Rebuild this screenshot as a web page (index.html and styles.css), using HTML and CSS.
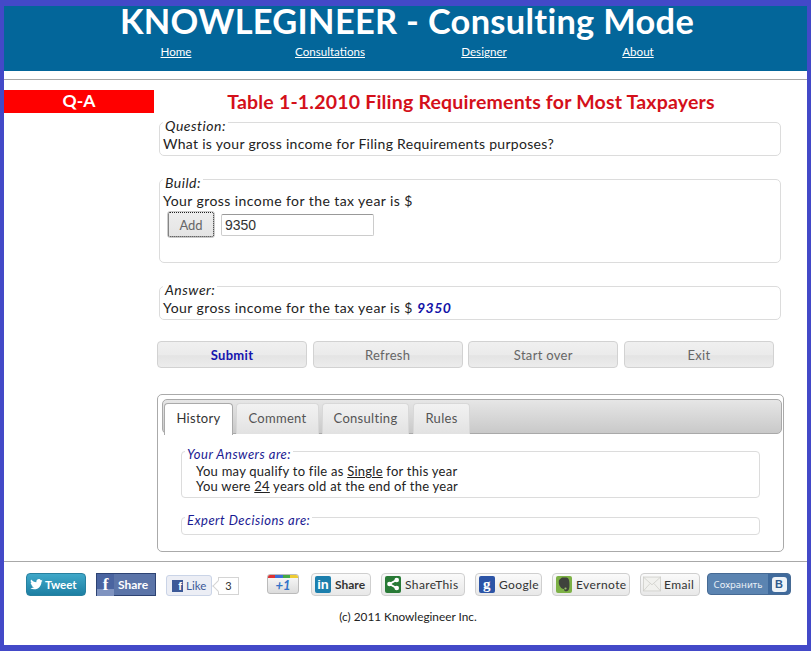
FILE: index.html
```html
<!DOCTYPE html>
<html lang="en">
<head>
<meta charset="utf-8">
<title>Knowlegineer - Consulting Mode</title>
<link rel="stylesheet" href="styles.css">
</head>
<body>
<div class="page">
  <header class="masthead">
    <h1>KNOWLEGINEER - Consulting Mode</h1>
    <nav class="nav">
      <a href="#">Home</a>
      <a href="#">Consultations</a>
      <a href="#">Designer</a>
      <a href="#">About</a>
    </nav>
  </header>
  <div class="main">
    <aside class="side"><div class="qa">Q-A</div></aside>
    <section class="content">
      <h2 class="title">Table 1-1.2010 Filing Requirements for Most Taxpayers</h2>
      <fieldset class="box">
        <legend>Question:</legend>
        <div class="line">What is your gross income for Filing Requirements purposes?</div>
      </fieldset>
      <fieldset class="box box-build">
        <legend>Build:</legend>
        <div class="line line-wide">Your gross income for the tax year is $</div>
        <div class="addrow">
          <button class="add" type="button">Add</button>
          <input class="amount" type="text" value="9350">
        </div>
      </fieldset>
      <fieldset class="box">
        <legend>Answer:</legend>
        <div class="line line-wide">Your gross income for the tax year is $ <b class="val">9350</b></div>
      </fieldset>
      <div class="actions">
        <button class="act act-primary" type="button">Submit</button>
        <button class="act" type="button">Refresh</button>
        <button class="act" type="button">Start over</button>
        <button class="act" type="button">Exit</button>
      </div>
      <div class="tabs">
        <div class="tabbar">
          <span class="tab tab-on">History</span>
          <span class="tab tab-comment">Comment</span>
          <span class="tab tab-consulting">Consulting</span>
          <span class="tab tab-rules">Rules</span>
        </div>
        <div class="tabbody">
          <fieldset class="sub">
            <legend>Your Answers are:</legend>
            <div class="subline">You may qualify to file as <u>Single</u> for this year</div>
            <div class="subline">You were <u>24</u> years old at the end of the year</div>
          </fieldset>
          <fieldset class="sub sub-empty">
            <legend>Expert Decisions are:</legend>
          </fieldset>
        </div>
      </div>
    </section>
  </div>
  <footer class="foot">
    <div class="social">
      <a class="s s-tweet" href="#"><svg width="13" height="11" viewBox="0 0 16 14"><path fill="#fff" d="M16 2.2c-.6.3-1.2.4-1.9.5.7-.4 1.2-1 1.4-1.800-.6.400-1.300.600-2 .800C12.900.6 12 .1 11.100.1 9.300.1 7.800 1.600 7.800 3.400c0 .3 0 .5.100.7C5.200 4 2.800 2.700 1.100.700.800 1.200.600 1.800.600 2.400c0 1.100.600 2.100 1.500 2.700-.500 0-1-.200-1.500-.400 0 1.600 1.100 2.900 2.600 3.200-.500.100-1 .200-1.500.100.400 1.300 1.600 2.300 3.100 2.300C3.600 11.200 1.800 11.900 0 11.700 1.500 12.600 3.200 13.200 5 13.200c6 0 9.300-5 9.300-9.300v-.400c.7-.400 1.200-1 1.700-1.300z"/></svg><span>Tweet</span></a>
      <a class="s s-share" href="#"><span class="fcell">f</span><span>Share</span></a>
      <span class="like"><a class="s s-like" href="#"><span class="fmini">f</span><span>Like</span></a><span class="count">3</span></span>
      <a class="s s-plus" href="#"><span class="gbar"></span><span class="gplus">+1</span></a>
      <a class="s s-pill s-in" href="#"><span class="ico ico-in">in</span><span>Share</span></a>
      <a class="s s-pill s-sharethis" href="#"><span class="ico ico-st"><svg width="14" height="14" viewBox="0 0 14 14"><path fill="none" stroke="#fff" stroke-width="2" d="M10.500 3 3.500 7l7 4"/><circle cx="3.500" cy="7" r="2.300" fill="#fff"/><circle cx="10.700" cy="3" r="2.300" fill="#fff"/><circle cx="10.700" cy="11" r="2.300" fill="#fff"/></svg></span><span>ShareThis</span></a>
      <a class="s s-pill s-google" href="#"><span class="ico ico-g">g</span><span>Google</span></a>
      <a class="s s-pill s-evernote" href="#"><span class="ico ico-ev"><svg width="14" height="15" viewBox="0 0 14 15"><path fill="#3f423c" d="M2 3 5 .500h4.500c2 .300 2.500 2 2.800 4.500.300 3 .200 5.500-.500 7.500-.500 1.500-2 2-3.500 1.700-1.200-.300-1.500-1.200-1-2.200-1.500 0-3-.500-3.800-2C1.700 8 1.500 5.500 2 3z"/><circle cx="8.500" cy="11.500" r="1.100" fill="#9cc06a"/></svg></span><span>Evernote</span></a>
      <a class="s s-pill s-email" href="#"><span class="ico ico-mail"><svg width="22" height="18" viewBox="0 0 22 18"><rect x=".5" y=".5" width="21" height="17" fill="#f1f1ee" stroke="#cfcfca"/><path fill="none" stroke="#cfcfca" d="M.5.500 11 10 21.500.500M.5 17.500l8-9M21.500 17.500l-8-9"/></svg></span><span>Email</span></a>
      <a class="s s-vk" href="#"><span class="vk-label">Сохранить</span><span class="vk-cell"><span class="vk-b">В</span></span></a>
    </div>
    <p class="copy">(c) 2011 Knowlegineer Inc.</p>
  </footer>
</div>
</body>
</html>
```
FILE: styles.css
```css
* { box-sizing: border-box; }
html, body { margin: 0; height: 651px; overflow: hidden; background: #4349c8; }
body { padding: 6px 4px 6px; font-family: Lato, "Noto Sans", sans-serif; color: #222; font-size: 14px; }
.page { height: 639px; background: #fff; }

.masthead { height: 65px; background: #03669a; text-align: center; color: #fff; }
.masthead h1 { margin: 0 0 0 3px; font-size: 34.4px; line-height: 33px; height: 33px; font-weight: 700; white-space: nowrap; letter-spacing: .3px; position: relative; top: -2px; }
.nav { display: grid; grid-template-columns: repeat(4, 154px); justify-content: center; margin: 4px 0 0 3px; font-size: 11.6px; line-height: 18px; }
.nav a { color: #fff; }

.main { display: flex; margin-top: 8px; padding-top: 10px; border-top: 1px solid #a8a8a8; height: 482px; }
.side { width: 150px; flex: none; }
.qa { height: 23px; line-height: 22px; background: #f00; color: #fff; font-weight: 700; font-size: 17.5px; text-align: center; }
.content { width: 622px; margin-left: 5px; flex: none; }
.title { margin: 0; height: 21px; line-height: 24px; font-size: 19.5px; font-weight: 700; color: #d4101a; text-align: center; white-space: nowrap; letter-spacing: .2px; padding-left: 2px; position: relative; z-index: 1; }

.box { margin: 0 0 12px; padding: 0 3px; border: 1px solid #dcdcdc; border-radius: 5px; min-width: 0; }
.box legend { padding: 8px 2px 0; line-height: 14px; font-size: 14px; font-style: italic; letter-spacing: .5px; color: #222; }
.line { line-height: 22px; height: 22px; letter-spacing: .3px; white-space: nowrap; }
.line-wide { letter-spacing: .43px; }
.box-build { height: 95px; }
.val { color: #1212a8; font-style: italic; font-weight: 700; letter-spacing: .5px; }
.addrow { display: flex; align-items: center; margin: -1px 0 0 4px; }
.add { width: 48px; height: 27px; padding: 0; border: 1px solid #ccc; border-radius: 3px; outline: 1px dotted #222; outline-offset: -2px; background: linear-gradient(#eee, #e4e4e4); color: #666; font: 13px Lato, sans-serif; }
.amount { width: 153px; height: 22px; margin-left: 6px; padding: 0 3px; border: 1px solid #ccc; border-top-color: #999; border-radius: 2px; font: 14px "Liberation Sans", sans-serif; color: #333; }

.actions { display: flex; justify-content: space-between; width: 617px; margin: 21px 0 0 -2px; }
.act { width: 150px; height: 27px; padding: 0; border: 1px solid #d2d2d2; border-radius: 4px; background: linear-gradient(#f0f0f0 0, #ebebeb 50%, #e4e4e4 55%, #ececec 100%); color: #666; font: 13px Lato, sans-serif; letter-spacing: .3px; }
.act-primary { color: #1515ae; font-weight: 700; }

.tabs { width: 627px; height: 158px; margin: 26px 0 0 -2px; padding: 4px 1px; border: 1px solid #aaa; border-radius: 5px; }
.tabbar { display: flex; height: 35px; padding: 3px 0 0 1px; border: 1px solid #a9a9a9; border-radius: 5px; background: linear-gradient(#e6e6e6, #c9c9c9); margin-left: 3px; }
.tab { height: 31px; margin-right: 3px; border: 1px solid #d8d8d8; border-bottom: 0; border-radius: 4px 4px 0 0; background: linear-gradient(#f2f2f2, #e2e2e2); color: #555; font-size: 13px; line-height: 29px; text-align: center; letter-spacing: .3px; }
.tab-on { width: 69px; background: #fff; color: #333; height: 32px; border-color: #aaa; }
.tab-comment { width: 83px; }
.tab-consulting { width: 87px; margin-right: 4px; }
.tab-rules { width: 57px; }
.tabbody { padding: 7px 0 0 22px; }

.sub { width: 579px; height: 57px; margin: 0 0 9px; padding: 3px 14px 0; border: 1px solid #dcdcdc; border-radius: 4px; min-width: 0; }
.sub legend { margin-left: -11px; padding: 6px 2px 0; line-height: 14px; font-size: 13px; font-style: italic; color: #1a1a92; letter-spacing: .5px; }
.subline { font-size: 13px; line-height: 15px; letter-spacing: .25px; white-space: nowrap; }
.sub-empty { height: 28px; }

.foot { border-top: 1px solid #a8a8a8; height: 84px; }
.social { display: flex; align-items: flex-start; padding: 11px 0 0 22px; height: 37px; font-size: 12px; }
.s { display: flex; align-items: center; height: 23px; text-decoration: none; color: #333; }
.s-tweet { width: 60px; margin-right: 10px; padding: 0 0 1px 3px; gap: 2px; border: 1px solid #27809f; border-radius: 4px; background: linear-gradient(#3fa8c9, #1d7fa3); color: #fff; font-weight: 700; font-size: 11.5px; }
.s-share { width: 60px; margin-right: 10px; padding-bottom: 1px; border: 1px solid #2d4373; background: #5b74a8; color: #fff; font-weight: 700; }
.fcell { width: 17px; height: 22px; margin-bottom: -1px; text-align: center; font: 700 17px/21px "Liberation Serif", serif; background: linear-gradient(#4a64a0 70%, #7f93c0 70%); margin-right: 4px; }
.like { display: flex; align-items: center; margin-right: 28px; margin-top: 2px; }
.s-like { width: 46px; height: 21px; padding-left: 5px; gap: 3px; border: 1px solid #cad4e7; border-radius: 3px; background: #eceef5; color: #3b5998; font-size: 11.5px; }
.fmini { width: 11px; height: 12px; background: #3b5998; color: #fff; font: 700 11px/12px "Liberation Sans", sans-serif; text-align: right; padding-right: 1px; }
.count { position: relative; width: 21px; height: 18px; margin-left: 6px; border: 1px solid #d4d4d4; background: #fff; font-size: 11px; line-height: 16px; text-align: center; color: #333; }
.count::before { content: ""; position: absolute; left: -5px; top: 4px; width: 7px; height: 7px; background: #fff; border-left: 1px solid #d4d4d4; border-bottom: 1px solid #d4d4d4; transform: rotate(45deg); }
.s-plus { position: relative; width: 32px; height: 20px; margin: 1px 12px 0 0; justify-content: center; border: 1px solid #bbb; border-radius: 3px; background: linear-gradient(#fafafa, #dcdcdc); overflow: hidden; }
.gbar { position: absolute; left: 0; right: 0; top: 0; height: 3px; background: linear-gradient(90deg, #d33 0 25%, #3a6fd8 25% 50%, #4a4 50% 75%, #ec3 75%); }
.gplus { color: #3273c8; font-style: italic; font-weight: 700; font-size: 13px; margin-top: 2px; }
.s-pill { margin-right: 10px; padding: 0 0 1px 3px; gap: 4px; border: 1px solid #cfcfcf; border-radius: 4px; background: linear-gradient(#fafafa, #e8e8e8); letter-spacing: .4px; }
.ico { display: flex; align-items: center; justify-content: center; width: 16px; height: 17px; border-radius: 2px; flex: none; color: #fff; }
.s-in { width: 60px; font-weight: 700; letter-spacing: 0; gap: 4px; }
.ico-in { background: #1c7fad; font: 700 13px/17px "Liberation Sans", sans-serif; }
.s-sharethis { width: 84px; }
.ico-st { background: #287a36; }
.s-google { width: 67px; }
.ico-g { background: #2c54a6; font: 700 15px/15px "Liberation Serif", serif; }
.s-evernote { width: 78px; }
.ico-ev { background: #7db146; }
.s-email { width: 60px; margin-right: 7px; gap: 3px; padding-left: 2px; }
.ico-mail { width: 18px; background: none; }
.ico-mail svg { width: 18px; height: 16px; }
.s-vk { width: 84px; height: 22px; border: 1px solid #466a94; border-radius: 4px; background: #5b84b1; color: #fff; overflow: hidden; }
.vk-label { width: 60px; font: 9.5px "Noto Sans", sans-serif; text-align: center; white-space: nowrap; color: #e8eff6; }
.vk-cell { flex: 1; align-self: stretch; display: flex; align-items: center; justify-content: center; background: #3f6a9c; }
.vk-b { width: 15px; height: 15px; border-radius: 3px; background: #eef3f8; color: #2f5a8c; font: 700 11px/15px "Liberation Sans", sans-serif; text-align: center; }
.copy { margin: 10px 0 0 5px; text-align: center; font-size: 11.8px; line-height: 16px; color: #222; }
```
